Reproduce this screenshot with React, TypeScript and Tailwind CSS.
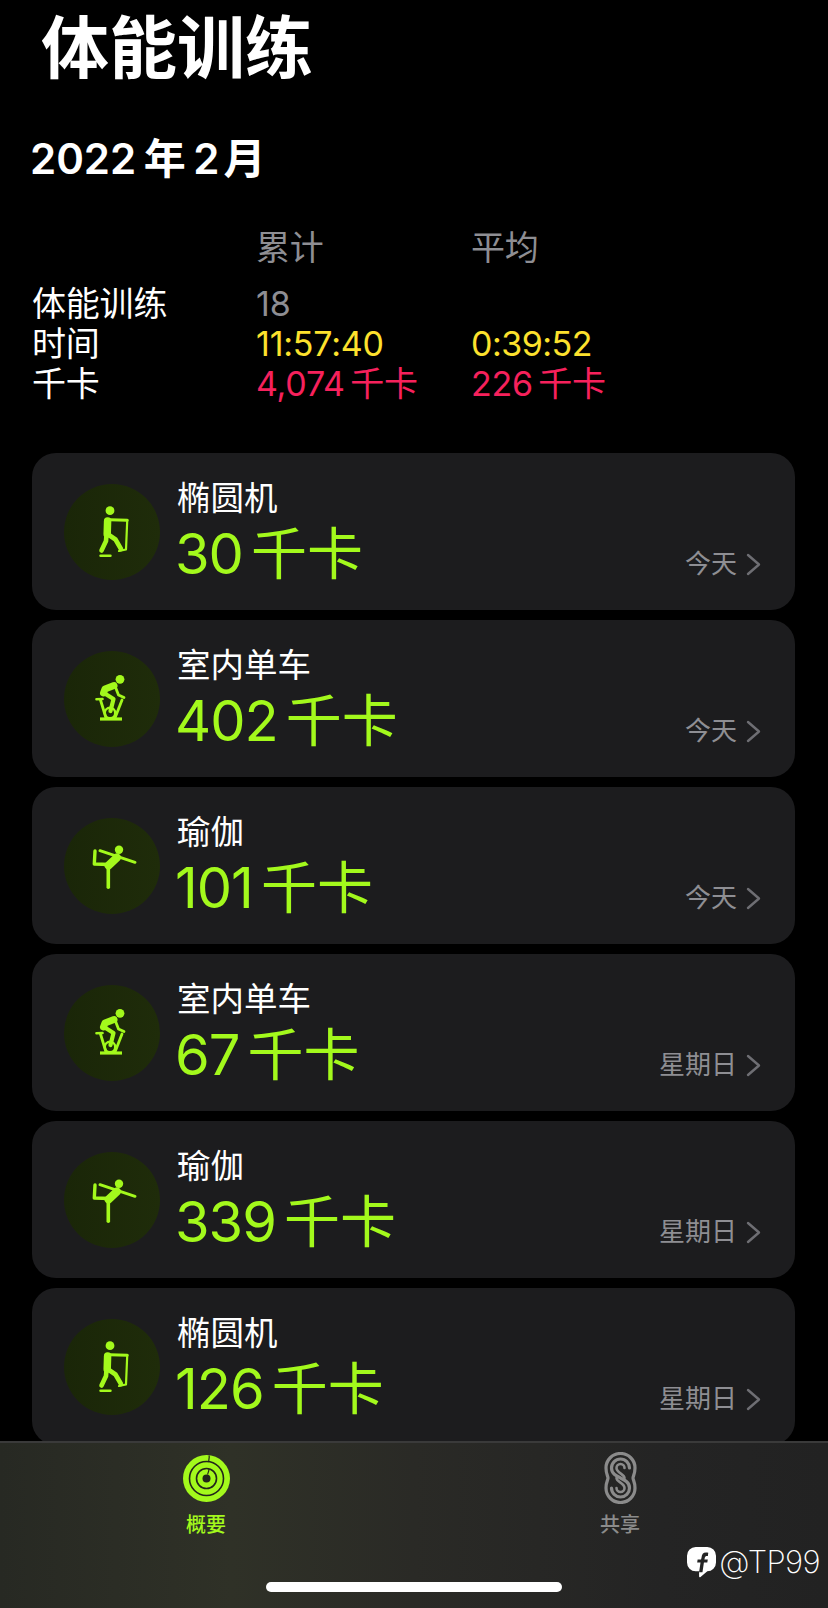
import React from "react";

const LIME = "#a3f91c";

function Elliptical() {
  return (
    <svg viewBox="0 0 96 96" className="w-full h-full" fill="none" stroke={LIME} strokeLinecap="round" strokeLinejoin="round">
      <circle cx="46" cy="26.7" r="4.4" fill={LIME} stroke="none" />
      <path d="M43.6 37 L43.2 50" strokeWidth="7.5" />
      <path d="M46 35.8 L63.3 36.3" strokeWidth="3" />
      <path d="M63.2 37 L62 65.5 L55 67" strokeWidth="2.2" />
      <path d="M42.5 51 L42 57 L37.5 66.5" strokeWidth="4.6" />
      <path d="M43.5 50 L51.5 55.5 L57 65" strokeWidth="4.6" />
      <path d="M36.5 71.8 L46.5 71.8" strokeWidth="2.4" />
    </svg>
  );
}

function Bike() {
  return (
    <svg viewBox="0 0 96 96" className="w-full h-full" fill="none" stroke={LIME} strokeLinecap="round" strokeLinejoin="round">
      <circle cx="56" cy="28.3" r="4.4" fill={LIME} stroke="none" />
      <path d="M50 34.5 L41 38 L39.5 42" strokeWidth="7" />
      <path d="M51 35 L54.5 44 L60 46.5" strokeWidth="2.8" />
      <path d="M40 42 L49.5 48 L46.5 60" strokeWidth="4.2" />
      <path d="M32.5 48.3 L38.5 48" strokeWidth="2.6" />
      <path d="M36.5 49 L42 67" strokeWidth="2.8" />
      <path d="M58 49 L51 67" strokeWidth="2.8" />
      <circle cx="46" cy="62" r="5.2" strokeWidth="2.4" />
      <path d="M36 68 L58 68" strokeWidth="3.2" strokeLinecap="butt" />
    </svg>
  );
}

function Yoga() {
  return (
    <svg viewBox="0 0 96 96" className="w-full h-full" fill="none" stroke={LIME} strokeLinecap="round" strokeLinejoin="round">
      <circle cx="55" cy="31.7" r="4.2" fill={LIME} stroke="none" />
      <path d="M36 32.7 L71 44.3" strokeWidth="3" />
      <path d="M31 33 L30.3 46 L46 46.5" strokeWidth="3.4" />
      <path d="M53 39.5 L44.5 47.5" strokeWidth="8" />
      <path d="M44.3 49 L44.3 69.3" strokeWidth="3.6" />
    </svg>
  );
}

function RingsIcon() {
  return (
    <svg viewBox="0 0 47 47" className="w-[47px] h-[47px]">
      <circle cx="23.5" cy="23.5" r="23.5" fill={LIME} />
      <circle cx="23.5" cy="23.5" r="17" fill="none" stroke="#22251b" strokeWidth="1.6" />
      <circle cx="23.5" cy="23.5" r="10" fill="none" stroke="#22251b" strokeWidth="1.6" />
      <circle cx="23.5" cy="23.5" r="4" fill="#22251b" />
      <path d="M26 0.5 C27 3 25 5 26 7" fill="none" stroke="#22251b" strokeWidth="1.2" />
      <path d="M26 14 C26 16 25 18 24.5 19.5" fill="none" stroke="#22251b" strokeWidth="1.2" />
    </svg>
  );
}

function ShareIcon() {
  const c = "#8b8b8b";
  return (
    <svg viewBox="0 0 33 52" className="w-[33px] h-[52px]" fill="none" stroke={c} strokeWidth="3.2" strokeLinecap="round">
      <path d="M31 16 A14.5 14.5 0 0 0 2 16 C2 22 4 24 4 26 C4 28 2 30 2 36 A14.5 14.5 0 0 0 31 36 C31 30 29 28 29 26 C29 24 31 22 31 16 Z" />
      <path d="M25.5 16 A9 9 0 0 0 7.5 16 C7.5 27 25.5 25 25.5 36 A9 9 0 0 1 7.5 36" />
      <path d="M20.5 16 A4 4 0 0 0 12.5 16 C12.5 21 20.5 22 20.5 26" strokeWidth="2.6" />
      <path d="M12.5 26 C12.5 30 20.5 31 20.5 36 A4 4 0 0 1 12.5 36" strokeWidth="2.6" />
    </svg>
  );
}

function FbIcon() {
  return (
    <svg viewBox="0 0 30 32" className="w-[29px] h-[31px]">
      <path d="M9 0 H21 A9 9 0 0 1 30 9 V16 A9 9 0 0 1 21 25 L14 31 Q12.5 32 12.5 30 V25 H9 A9 9 0 0 1 0 16 V9 A9 9 0 0 1 9 0 Z" fill="#ffffff" />
      <path d="M22 6 C17 5 15.5 7 15 11 L14.5 13 H11 L10.5 16 H14 L12.5 26 H16 L17.5 16 H21 L21.5 13 H18 L18.4 11 C18.7 9.3 20 9 21.6 9.3 Z" fill="#242424" />
    </svg>
  );
}

const cards = [
  { name: "椭圆机", value: "30", day: "今天", Icon: Elliptical },
  { name: "室内单车", value: "402", day: "今天", Icon: Bike },
  { name: "瑜伽", value: "101", day: "今天", Icon: Yoga },
  { name: "室内单车", value: "67", day: "星期日", Icon: Bike },
  { name: "瑜伽", value: "339", day: "星期日", Icon: Yoga },
  { name: "椭圆机", value: "126", day: "星期日", Icon: Elliptical },
];

function Card({ name, value, day, Icon }: (typeof cards)[number]) {
  return (
    <div className="flex h-[157px] rounded-[24px] bg-[#1c1c1e] pl-[32px] pr-[34px] pt-[31px]">
      <div className="w-[96px] h-[96px] shrink-0 rounded-full bg-[linear-gradient(90deg,#1a2608,#1f2c0a)]">
        <Icon />
      </div>
      <div className="ml-[17px] flex flex-col">
        <div className="h-[34px] -mt-[3px] text-[33.5px] leading-[34px] text-white">{name}</div>
        <div className="mt-[7px] -ml-[2px] flex gap-[8px] text-[56px] leading-[64px] text-[#a3f91c] whitespace-nowrap">
          <span className="tracking-[-1px]">{value}</span>
          <span>千卡</span>
        </div>
      </div>
      <div className="ml-auto self-end mb-[30px] flex items-center gap-[9px]">
        <span className="text-[26px] leading-[32px] text-[#8e8e93]">{day}</span>
        <svg viewBox="0 0 15 23" className="w-[15px] h-[23px]" fill="none" stroke="#6e6e73" strokeWidth="2.4" strokeLinecap="round" strokeLinejoin="round">
          <path d="M2 2 L13 11.5 L2 21" />
        </svg>
      </div>
    </div>
  );
}

export default function App() {
  return (
    <div className="relative w-[828px] h-[1608px] overflow-hidden bg-black font-['Inter','Noto_Sans_CJK_SC',sans-serif]">
      <h1 className="pl-[41px] pt-[8px] h-[118px] text-[68px] leading-[80px] font-bold text-white">体能训练</h1>
      <h2 className="pl-[30px] mt-[13px] text-[42px] leading-[56px] font-semibold text-white [word-spacing:-3px]">
        2022 年 2<span className="ml-[4px]">月</span>
      </h2>

      <div className="mt-[41px] ml-[32px] grid grid-cols-[224px_216px_1fr] text-[34px] leading-[40px] tracking-[-0.2px]">
        <div className="h-[56px]" />
        <div className="text-[#8e8e93]">累计</div>
        <div className="text-[#8e8e93] -ml-[1px]">平均</div>
        <div className="text-white">体能训练</div>
        <div className="text-[#8e8e93]">18</div>
        <div />
        <div className="text-white">时间</div>
        <div className="text-[#fde12d]">11:57:40</div>
        <div className="text-[#fde12d] -ml-[1px] tracking-[-0.5px]">0:39:52</div>
        <div className="text-white">千卡</div>
        <div className="text-[#f6215c] [word-spacing:-4px]">4,074 千卡</div>
        <div className="text-[#f6215c] -ml-[1px] [word-spacing:-4px]">226 千卡</div>
      </div>

      <div className="mt-[49px] ml-[32px] w-[763px] flex flex-col gap-[10px]">
        {cards.map((c, i) => (
          <Card key={i} {...c} />
        ))}
      </div>

      <div className="absolute left-0 right-0 bottom-0 h-[167px] border-t-2 border-[#3a3a3a] bg-[linear-gradient(90deg,#272923_0%,#2f3127_28%,#2a2a26_50%,#242424_80%,#222222_100%)]">
        <div className="absolute left-[166px] w-[80px] top-[9px] flex flex-col items-center">
          <div className="h-[56px] mt-[3px]"><RingsIcon /></div>
          <div className="text-[20px] leading-[28px] font-medium text-[#a3f91c]">概要</div>
        </div>
        <div className="absolute left-[580px] w-[80px] top-[9px] flex flex-col items-center">
          <div className="h-[59px]"><ShareIcon /></div>
          <div className="text-[20px] leading-[28px] font-medium text-[#8b8b8b]">共享</div>
        </div>
        <div className="absolute right-[8px] top-[101px] flex items-center gap-[3px] text-white">
          <FbIcon />
          <span className="text-[31px] leading-[36px] font-extralight tracking-[-0.6px]">@TP99</span>
        </div>
        <div className="absolute left-[266px] top-[139px] w-[296px] h-[10px] rounded-full bg-white" />
      </div>
    </div>
  );
}
